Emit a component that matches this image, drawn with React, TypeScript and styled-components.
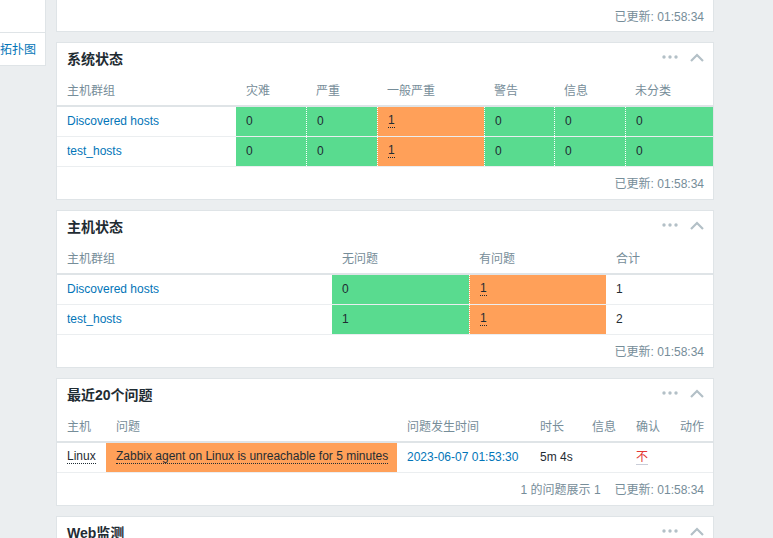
import React from "react";
import styled, { createGlobalStyle } from "styled-components";

const GlobalStyle = createGlobalStyle`
  html, body { margin: 0; padding: 0; overflow: hidden; background: #ebeef0; }
  body {
    font-family: "Liberation Sans", Arial, "Noto Sans CJK SC", sans-serif;
    font-size: 12px;
    color: #1f2c33;
  }
  * { box-sizing: border-box; }
`;

const Page = styled.div`
  display: flex;
  align-items: flex-start;
  gap: 10px;
  width: 773px;
  height: 538px;
  overflow: hidden;
`;

const Sidebar = styled.div`
  width: 46px;
  flex: none;
  background: #ffffff;
  border-right: 1px solid #dfe4e7;
  border-bottom: 1px solid #dfe4e7;
`;

const SideSection = styled.div<{ $line?: boolean }>`
  height: ${(p) => (p.$line ? "33px" : "32px")};
  border-bottom: ${(p) => (p.$line ? "1px solid #dfe4e7" : "none")};
  display: flex;
  align-items: center;
  white-space: nowrap;
  overflow: hidden;
`;

const SideLink = styled.span`
  color: #0275b8;
  font-size: 12px;
  margin-top: -2px;
`;

const Main = styled.div`
  width: 658px;
  flex: none;
  display: flex;
  flex-direction: column;
  gap: 10px;
`;

const Widget = styled.section<{ $partial?: boolean }>`
  background: #ffffff;
  border: 1px solid #dfe4e7;
  border-top: ${(p) => (p.$partial ? "none" : "1px solid #dfe4e7")};
`;

const Head = styled.div`
  height: 32px;
  display: flex;
  align-items: center;
  justify-content: space-between;
  padding: 0 9px 0 10px;
`;

const Title = styled.h4`
  margin: 0;
  font-size: 14px;
  font-weight: bold;
  color: #1f2c33;
  padding-bottom: 3px;
`;

const Tools = styled.div`
  display: flex;
  align-items: center;
  gap: 12px;
  margin-bottom: 4px;
`;

const Grid = styled.div<{ $cols: string; $head?: boolean }>`
  display: grid;
  grid-template-columns: ${(p) => p.$cols};
  height: ${(p) => (p.$head ? "32px" : "30px")};
  border-bottom: ${(p) => (p.$head ? "2px solid #dfe4e7" : "1px solid #ebeef0")};
`;

const Th = styled.div`
  display: flex;
  align-items: center;
  padding: 0 0 1px 10px;
  color: #768d99;
  white-space: nowrap;
`;

const Td = styled.div<{ $bg?: string; $sep?: boolean; $color?: string }>`
  display: flex;
  align-items: center;
  padding: 0 10px 1px 10px;
  white-space: nowrap;
  overflow: hidden;
  background: ${(p) => p.$bg || "transparent"};
  border-left: ${(p) => (p.$sep ? "1px dotted #ffffff" : "none")};
  color: ${(p) => p.$color || "#1f2c33"};
`;

const Link = styled.span`
  color: #0275b8;
`;

const Action = styled.span`
  color: #1f2c33;
  border-bottom: 1px dotted #1f2c33;
  line-height: 13px;
`;

const AckNo = styled.span`
  color: #e33734;
  border-bottom: 1px solid #c9cdd8;
  line-height: 14px;
`;

const Footer = styled.div<{ $h?: number }>`
  height: ${(p) => p.$h || 32}px;
  display: flex;
  align-items: center;
  justify-content: flex-end;
  gap: 14px;
  padding: 0 9px 1px 10px;
  color: #768d99;
`;

const GREEN = "#59db8f";
const ORANGE = "#ffa059";

const Dots = () => (
  <svg width="16" height="4" viewBox="0 0 16 4">
    <circle cx="2" cy="2" r="1.7" fill="#b3c0c7" />
    <circle cx="8" cy="2" r="1.7" fill="#b3c0c7" />
    <circle cx="14" cy="2" r="1.7" fill="#b3c0c7" />
  </svg>
);

const Chevron = () => (
  <svg width="14" height="9" viewBox="0 0 14 9">
    <polyline points="1,8 7,2 13,8" fill="none" stroke="#b3c0c7" strokeWidth="2.2" />
  </svg>
);

const WidgetHead: React.FC<{ title: string }> = ({ title }) => (
  <Head>
    <Title>{title}</Title>
    <Tools>
      <Dots />
      <Chevron />
    </Tools>
  </Head>
);

const SYS_COLS = "179px 70px 71px 107px 70px 71px 88px";
const HOST_COLS = "275px 137px 137px 107px";
const PROB_COLS = "49px 291px 133px 52px 44px 44px 43px";

const sysHeaders = ["主机群组", "灾难", "严重", "一般严重", "警告", "信息", "未分类"];
const sysRows = [
  { name: "Discovered hosts", vals: ["0", "0", "1", "0", "0", "0"] },
  { name: "test_hosts", vals: ["0", "0", "1", "0", "0", "0"] },
];

const hostRows = [
  { name: "Discovered hosts", ok: "0", bad: "1", total: "1" },
  { name: "test_hosts", ok: "1", bad: "1", total: "2" },
];

export default function App() {
  return (
    <>
      <GlobalStyle />
      <Page>
        <Sidebar>
          <SideSection $line />
          <SideSection>
            <SideLink>拓扑图</SideLink>
          </SideSection>
        </Sidebar>
        <Main>
          <Widget $partial>
            <Footer $h={31}>已更新: 01:58:34</Footer>
          </Widget>

          <Widget>
            <WidgetHead title="系统状态" />
            <Grid $cols={SYS_COLS} $head>
              {sysHeaders.map((h) => (
                <Th key={h}>{h}</Th>
              ))}
            </Grid>
            {sysRows.map((r) => (
              <Grid $cols={SYS_COLS} key={r.name}>
                <Td>
                  <Link>{r.name}</Link>
                </Td>
                {r.vals.map((v, i) => (
                  <Td key={i} $bg={v === "0" ? GREEN : ORANGE} $sep={i > 0}>
                    {v === "0" ? v : <Action>{v}</Action>}
                  </Td>
                ))}
              </Grid>
            ))}
            <Footer>已更新: 01:58:34</Footer>
          </Widget>

          <Widget>
            <WidgetHead title="主机状态" />
            <Grid $cols={HOST_COLS} $head>
              <Th>主机群组</Th>
              <Th>无问题</Th>
              <Th>有问题</Th>
              <Th>合计</Th>
            </Grid>
            {hostRows.map((r) => (
              <Grid $cols={HOST_COLS} key={r.name}>
                <Td>
                  <Link>{r.name}</Link>
                </Td>
                <Td $bg={GREEN}>{r.ok}</Td>
                <Td $bg={ORANGE} $sep>
                  <Action>{r.bad}</Action>
                </Td>
                <Td>{r.total}</Td>
              </Grid>
            ))}
            <Footer>已更新: 01:58:34</Footer>
          </Widget>

          <Widget>
            <WidgetHead title="最近20个问题" />
            <Grid $cols={PROB_COLS} $head>
              <Th>主机</Th>
              <Th>问题</Th>
              <Th>问题发生时间</Th>
              <Th>时长</Th>
              <Th>信息</Th>
              <Th>确认</Th>
              <Th>动作</Th>
            </Grid>
            <Grid $cols={PROB_COLS}>
              <Td>
                <Action>Linux</Action>
              </Td>
              <Td $bg={ORANGE}>
                <Action>Zabbix agent on Linux is unreachable for 5 minutes</Action>
              </Td>
              <Td>
                <Link>2023-06-07 01:53:30</Link>
              </Td>
              <Td>5m 4s</Td>
              <Td />
              <Td>
                <AckNo>不</AckNo>
              </Td>
              <Td />
            </Grid>
            <Footer>
              <span>1 的问题展示 1</span>
              <span>已更新: 01:58:34</span>
            </Footer>
          </Widget>

          <Widget>
            <WidgetHead title="Web监测" />
            <Footer />
          </Widget>
        </Main>
      </Page>
    </>
  );
}
